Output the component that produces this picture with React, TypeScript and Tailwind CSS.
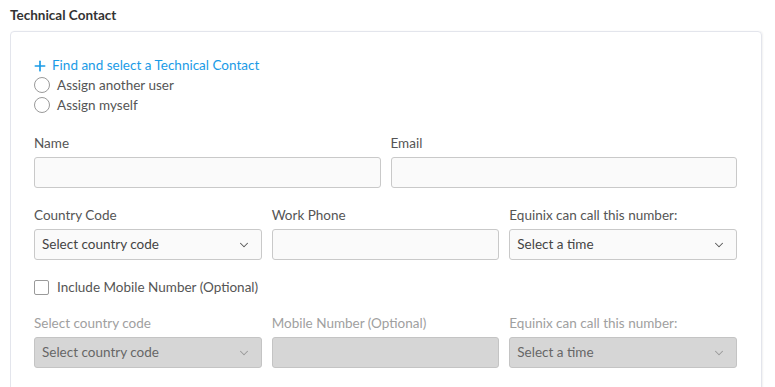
import { ChevronDown, Plus } from 'lucide-react';

const font = { fontFamily: 'Lato, "Open Sans", Arial, sans-serif' };

function Label({ text, disabled }: { text: string; disabled?: boolean }) {
	return (
		<div className={`mb-[6px] h-[15px] text-[13.5px] leading-[15px] ${disabled ? 'text-[#a0a0a0]' : 'text-[#555]'}`}>{text}</div>
	);
}

function TextBox({ disabled }: { disabled?: boolean }) {
	return (
		<div
			className={`h-[31px] rounded-[3px] border ${disabled ? 'border-[#c4c4c4] bg-[#d6d6d6]' : 'border-[#c9c9c9] bg-[#fafafa]'}`}
		/>
	);
}

function SelectBox({ placeholder, disabled }: { placeholder: string; disabled?: boolean }) {
	return (
		<div
			className={`flex h-[31px] items-center justify-between rounded-[3px] border pl-[7px] pr-[10px] text-[13.5px] ${
				disabled ? 'border-[#c4c4c4] bg-[#d6d6d6] text-[#666]' : 'border-[#c9c9c9] bg-[#fafafa] text-[#444]'
			}`}
		>
			<span>{placeholder}</span>
			<ChevronDown size={14} strokeWidth={1.75} className={disabled ? 'text-[#999]' : 'text-[#555]'} />
		</div>
	);
}

function Radio({ text }: { text: string }) {
	return (
		<label className="flex h-[20px] items-center gap-[7px] text-[13.5px] text-[#555]">
			<span className="h-[16px] w-[16px] rounded-full border border-[#9a9a9a] bg-white" />
			{text}
		</label>
	);
}

export default function App() {
	return (
		<div className="h-[387px] overflow-hidden bg-white pl-[10px] pr-[13px] pt-[7px]" style={font}>
			<h2 className="text-[13.5px] font-bold leading-[16px] text-[#333]">Technical Contact</h2>
			<div className="mt-[8px] h-[400px] rounded-[4px] border border-[#e3e5ec] pl-[23px] pr-[24px] pt-[25px] shadow-[1px_0_2px_rgba(0,0,0,0.06)]">
				<a className="flex h-[17px] items-center gap-[4px] text-[13.5px] text-[#1a9be6]">
					<Plus size={16} strokeWidth={2.5} className="-ml-[2px]" />
					Find and select a Technical Contact
				</a>
				<div className="mt-[1px]">
					<Radio text="Assign another user" />
					<Radio text="Assign myself" />
				</div>

				<div className="mt-[21px] grid grid-cols-2 gap-[10px]">
					<div>
						<Label text="Name" />
						<TextBox />
					</div>
					<div>
						<Label text="Email" />
						<TextBox />
					</div>
				</div>

				<div className="mt-[20px] grid grid-cols-3 gap-[10px]">
					<div>
						<Label text="Country Code" />
						<SelectBox placeholder="Select country code" />
					</div>
					<div>
						<Label text="Work Phone" />
						<TextBox />
					</div>
					<div>
						<Label text="Equinix can call this number:" />
						<SelectBox placeholder="Select a time" />
					</div>
				</div>

				<label className="mt-[19px] flex h-[16px] items-center gap-[8px] text-[13.5px] text-[#555]">
					<span className="h-[15px] w-[15px] rounded-[2px] border border-[#9a9a9a] bg-white" />
					Include Mobile Number (Optional)
				</label>

				<div className="mt-[21px] grid grid-cols-3 gap-[10px]">
					<div>
						<Label text="Select country code" disabled />
						<SelectBox placeholder="Select country code" disabled />
					</div>
					<div>
						<Label text="Mobile Number (Optional)" disabled />
						<TextBox disabled />
					</div>
					<div>
						<Label text="Equinix can call this number:" disabled />
						<SelectBox placeholder="Select a time" disabled />
					</div>
				</div>
			</div>
		</div>
	);
}
